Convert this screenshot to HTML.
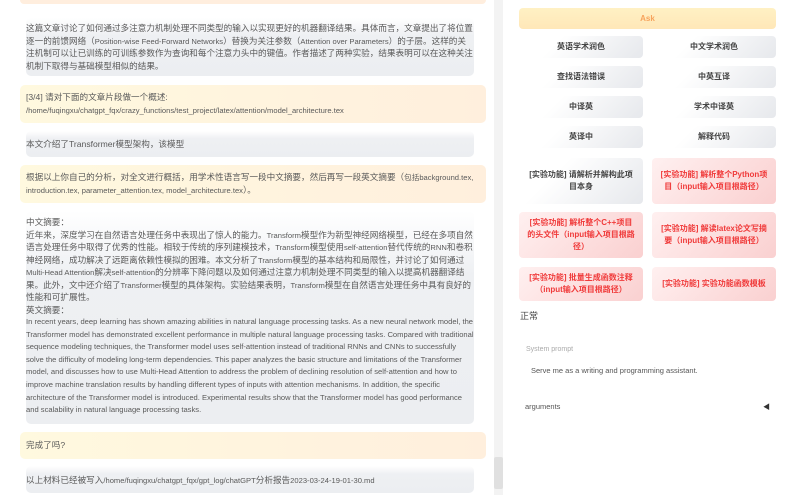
<!DOCTYPE html>
<html><head><meta charset="utf-8"><style>
*{margin:0;padding:0;box-sizing:border-box}
body{width:800px;height:495px;overflow:hidden;background:#fff;font-family:"Liberation Sans","Noto Sans CJK SC",sans-serif;position:relative;color:#555}
.b{position:absolute;left:26px;width:448px;border-radius:5px;background:linear-gradient(180deg,#fff 0%,#eef0f3 30%,#eceef1 100%);padding:5px 0 5px 0;font-size:8.6px;line-height:12.5px;color:#5a5a5a}
.u{position:absolute;left:20px;width:466px;border-radius:5px;background:linear-gradient(90deg,#fff9df,#ffefdd);padding:6px 6px;font-size:8.6px;line-height:12.5px;color:#5a5a5a}
.b p,.u p{margin:0}
.btn{position:absolute;width:124px;border-radius:4px;font-size:8px;font-weight:bold;text-align:center;display:flex;align-items:center;justify-content:center;line-height:12px;padding:0 8px}
.g{background:linear-gradient(135deg,#fff 30%,#e6e8ec);color:#444}
.r{background:linear-gradient(135deg,#fff0f0,#fad0d0);color:#f03a3a}
.e{font-size:7.6px;line-height:1}
.en{font-size:7.6px;line-height:12.6px}
</style></head><body>
<div style="position:absolute;left:20px;top:0;width:466px;height:4px;background:#ffeede;border-radius:0 0 4px 4px"></div>
<div class="b" style="top:18px;height:58px;padding:4px 0"><p>这篇文章讨论了如何通过多注意力机制处理不同类型的输入以实现更好的机器翻译结果。具体而言，文章提出了将位置逐一的前馈网络（<span class="e">Position-wise Feed-Forward Networks</span>）替换为关注参数（<span class="e">Attention over Parameters</span>）的子层。这样的关注机制可以让已训练的可训练参数作为查询和每个注意力头中的键值。作者描述了两种实验，结果表明可以在这种关注机制下取得与基础模型相似的结果。</p></div>
<div class="u" style="top:85px;height:38px"><p>[3/4] 请对下面的文章片段做一个概述:<br><span class="e">/home/fuqingxu/chatgpt_fqx/crazy_functions/test_project/latex/attention/model_architecture.tex</span></p></div>
<div class="b" style="top:131px;height:26px;padding-top:7px"><p>本文介绍了Transformer模型架构，该模型</p></div>
<div class="u" style="top:165px;height:38px"><p>根据以上你自己的分析，对全文进行概括，用学术性语言写一段中文摘要，然后再写一段英文摘要（<span class="e">包括background.tex, introduction.tex, parameter_attention.tex, model_architecture.tex</span>）。</p></div>
<div class="b" style="top:211px;height:213px;padding-top:5px"><p>中文摘要：<br>近年来，深度学习在自然语言处理任务中表现出了惊人的能力。<span class="e">Transform</span>模型作为新型神经网络模型，已经在多项自然语言处理任务中取得了优秀的性能。相较于传统的序列建模技术，<span class="e">Transform</span>模型使用<span class="e">self-attention</span>替代传统的<span class="e">RNN</span>和卷积神经网络，成功解决了远距离依赖性模拟的困难。本文分析了<span class="e">Transform</span>模型的基本结构和局限性，并讨论了如何通过<span class="e">Multi-Head Attention</span>解决<span class="e">self-attention</span>的分辨率下降问题以及如何通过注意力机制处理不同类型的输入以提高机器翻译结果。此外，文中还介绍了<span class="e">Transformer</span>模型的具体架构。实验结果表明，<span class="e">Transform</span>模型在自然语言处理任务中具有良好的性能和可扩展性。<br>英文摘要：</p><div class="en">In recent years, deep learning has shown amazing abilities in natural language processing tasks. As a new neural network model, the Transformer model has demonstrated excellent performance in multiple natural language processing tasks. Compared with traditional sequence modeling techniques, the Transformer model uses self-attention instead of traditional RNNs and CNNs to successfully solve the difficulty of modeling long-term dependencies. This paper analyzes the basic structure and limitations of the Transformer model, and discusses how to use Multi-Head Attention to address the problem of declining resolution of self-attention and how to improve machine translation results by handling different types of inputs with attention mechanisms. In addition, the specific architecture of the Transformer model is introduced. Experimental results show that the Transformer model has good performance and scalability in natural language processing tasks.</div></div>
<div class="u" style="top:432px;height:27px;padding-top:7px"><p>完成了吗?</p></div>
<div class="b" style="top:466px;height:27px;padding-top:8px"><p>以上材料已经被写入<span class="e">/home/fuqingxu/chatgpt_fqx/gpt_log/chatGPT</span>分析报告<span class="e">2023-03-24-19-01-30.md</span></p></div>
<div style="position:absolute;left:494px;top:0;width:9px;height:495px;background:#f3f3f3"></div>
<div style="position:absolute;left:494px;top:457px;width:9px;height:32px;background:#e0e0e0;border-radius:2px"></div>

<div style="position:absolute;left:519px;top:8px;width:257px;height:21px;border-radius:4px;background:linear-gradient(180deg,#fff1c4,#ffe7b8);color:#f7a35c;font-size:8px;font-weight:bold;text-align:center;line-height:21px">Ask</div>
<div class="btn g" style="left:519px;top:36px;height:22px">英语学术润色</div>
<div class="btn g" style="left:652px;top:36px;height:22px">中文学术润色</div>
<div class="btn g" style="left:519px;top:66px;height:22px">查找语法错误</div>
<div class="btn g" style="left:652px;top:66px;height:22px">中英互译</div>
<div class="btn g" style="left:519px;top:96px;height:22px">中译英</div>
<div class="btn g" style="left:652px;top:96px;height:22px">学术中译英</div>
<div class="btn g" style="left:519px;top:126px;height:22px">英译中</div>
<div class="btn g" style="left:652px;top:126px;height:22px">解释代码</div>
<div class="btn g" style="left:519px;top:158px;height:46px">[实验功能] 请解析并解构此项目本身</div>
<div class="btn r" style="left:652px;top:158px;height:46px">[实验功能] 解析整个Python项目（input输入项目根路径）</div>
<div class="btn r" style="left:519px;top:212px;height:46px">[实验功能] 解析整个C++项目的头文件（input输入项目根路径）</div>
<div class="btn r" style="left:652px;top:212px;height:46px">[实验功能] 解读latex论文写摘要（input输入项目根路径）</div>
<div class="btn r" style="left:519px;top:267px;height:34px">[实验功能] 批量生成函数注释（input输入项目根路径）</div>
<div class="btn r" style="left:652px;top:267px;height:34px">[实验功能] 实验功能函数模板</div>
<div style="position:absolute;left:520px;top:309px;font-size:9px;color:#444">正常</div>
<div style="position:absolute;left:526px;top:346px;font-size:7px;color:#aaa">System prompt</div>
<div style="position:absolute;left:531px;top:366px;font-size:7.5px;color:#555">Serve me as a writing and programming assistant.</div>
<div style="position:absolute;left:525px;top:402px;font-size:7.5px;color:#555">arguments</div>
<div style="position:absolute;left:763px;top:402px;font-size:7px;color:#333">◀</div>
</body></html>
